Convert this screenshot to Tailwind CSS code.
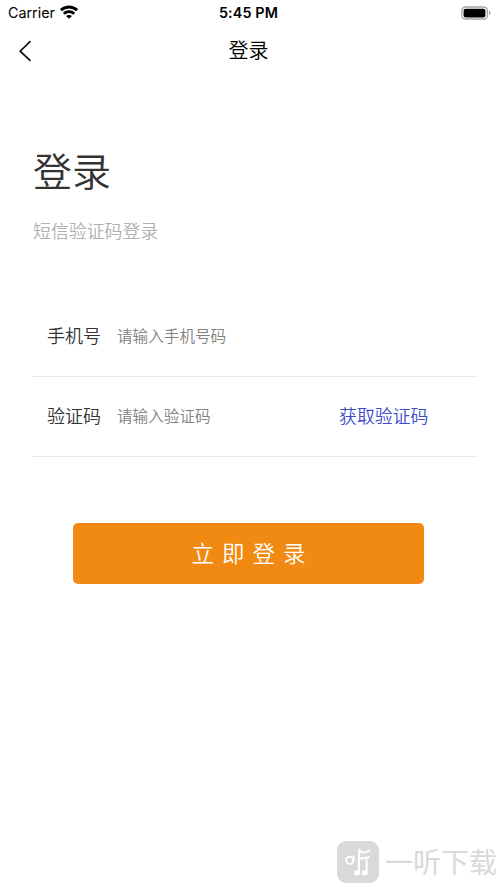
<!DOCTYPE html>
<html lang="zh-CN">
<head>
<meta charset="utf-8">
<meta name="viewport" content="width=device-width, initial-scale=1">
<title>登录</title>
<script src="https://cdn.jsdelivr.net/npm/@tailwindcss/browser@4"></script>
</head>
<body class="bg-white">
<div class="relative flex h-[883px] w-[497px] flex-col overflow-hidden bg-white font-['Noto_Sans_CJK_SC',sans-serif] text-[#333]">
  <div class="grid h-[26px] shrink-0 grid-cols-3 items-center pr-[6px] pl-[8px] font-[Inter,sans-serif] text-black">
    <div class="flex items-center gap-[5px]">
      <span class="text-[14.3px] leading-[26px]">Carrier</span>
      <svg class="mb-[2px] h-[14px] w-[18px]" viewBox="0 0 18 14" fill="none" stroke="#000">
        <path d="M.9 5.2C5.4.9 12.6.9 17.1 5.2" stroke-width="3"/>
        <path d="M3.8 8.7c2.9-2.7 7.5-2.7 10.4 0" stroke-width="2.8"/>
        <path d="M9 13.8 6 11.1c1.7-1.4 4.3-1.4 6 0z" fill="#000" stroke="none"/>
      </svg>
    </div>
    <span class="-ml-[2px] text-center text-[14.3px] leading-[26px] font-semibold whitespace-nowrap tracking-[0.15px]">5:45 PM</span>
    <svg class="mb-[1px] h-[14px] w-[30px] justify-self-end" viewBox="0 0 30 14">
      <rect x=".9" y="1" width="25.4" height="12" rx="3.6" fill="#fff" stroke="#a5a5a5" stroke-width="1.3"/>
      <rect x="2.6" y="2.8" width="21.8" height="8.6" rx="2" fill="#000"/>
      <path d="M28 4.8c1.9.7 1.9 3.7 0 4.4z" fill="#999"/>
    </svg>
  </div>
  <div class="grid h-[48px] shrink-0 grid-cols-3 items-center text-black">
    <svg class="mt-[2px] ml-[18px] h-[24px] w-[15px]" viewBox="0 0 15 24" fill="none" stroke="#111" stroke-width="1.7"><path d="M12.5 2.2 2.2 12.2l10.3 9.6"/></svg>
    <h1 class="text-center text-[20px] leading-[48px] font-[350]">登录</h1>
  </div>
  <main class="flex flex-col">
    <h2 class="mt-[65px] ml-[33px] text-[39px] leading-[60px] font-[350]">登录</h2>
    <p class="mt-[16px] ml-[33px] text-[17.9px] leading-[30px] font-[350] text-[#b0b0b0]">短信验证码登录</p>
    <div class="mt-[51px] mr-[20px] ml-[32px] flex h-[81px] items-center border-b-[1.5px] border-[#ece9e9] pb-[2px] pl-[15px]">
      <span class="w-[70px] text-[18px] leading-[28px] font-[350]">手机号</span>
      <span class="pb-px text-[15.6px] leading-[28px] font-[350] text-[#808080]">请输入手机号码</span>
    </div>
    <div class="mr-[20px] ml-[32px] flex h-[80px] items-center border-b-[1.5px] border-[#ece9e9] pb-[3px] pl-[15px]">
      <span class="w-[70px] text-[18px] leading-[28px] font-[350]">验证码</span>
      <span class="w-[222px] text-[15.6px] leading-[28px] font-[350] text-[#808080]">请输入验证码</span>
      <span class="text-[17.9px] leading-[28px] font-[350] text-[#3d4dc9]">获取验证码</span>
    </div>
    <button class="mt-[66px] ml-[73px] h-[61px] w-[351px] rounded-[5px] bg-[#f08a12] pb-[2px] pl-[8px] text-[22.5px] leading-[59px] font-[350] tracking-[8px] text-white">立即登录</button>
  </main>
  <div class="absolute top-[841px] left-[337px] flex h-[42px] items-center gap-[6px] text-[#d9d9d9]">
    <svg class="h-[42px] w-[42px]" viewBox="0 0 42 42" fill="none" stroke="#fff" stroke-width="2" stroke-linecap="round">
      <rect width="42" height="42" rx="9" fill="#d9d9d9" stroke="none"/>
      <circle cx="12.8" cy="19.3" r="3.6"/>
      <path d="M16.6 15.4v3.4"/>
      <path d="M22.4 8.6c.4 3.8 6 3.4 10.4.8M22 10v22M22 18c3-1 5-.5 9.8-1.8M29.6 17.5V32"/>
      <ellipse cx="20" cy="31.8" rx="2" ry="1.6" fill="#fff"/>
      <ellipse cx="27.8" cy="31.8" rx="2" ry="1.6" fill="#fff"/>
    </svg>
    <span class="pb-px text-[28px] leading-[41px] whitespace-nowrap">一听下载</span>
  </div>
</div>
</body>
</html>
